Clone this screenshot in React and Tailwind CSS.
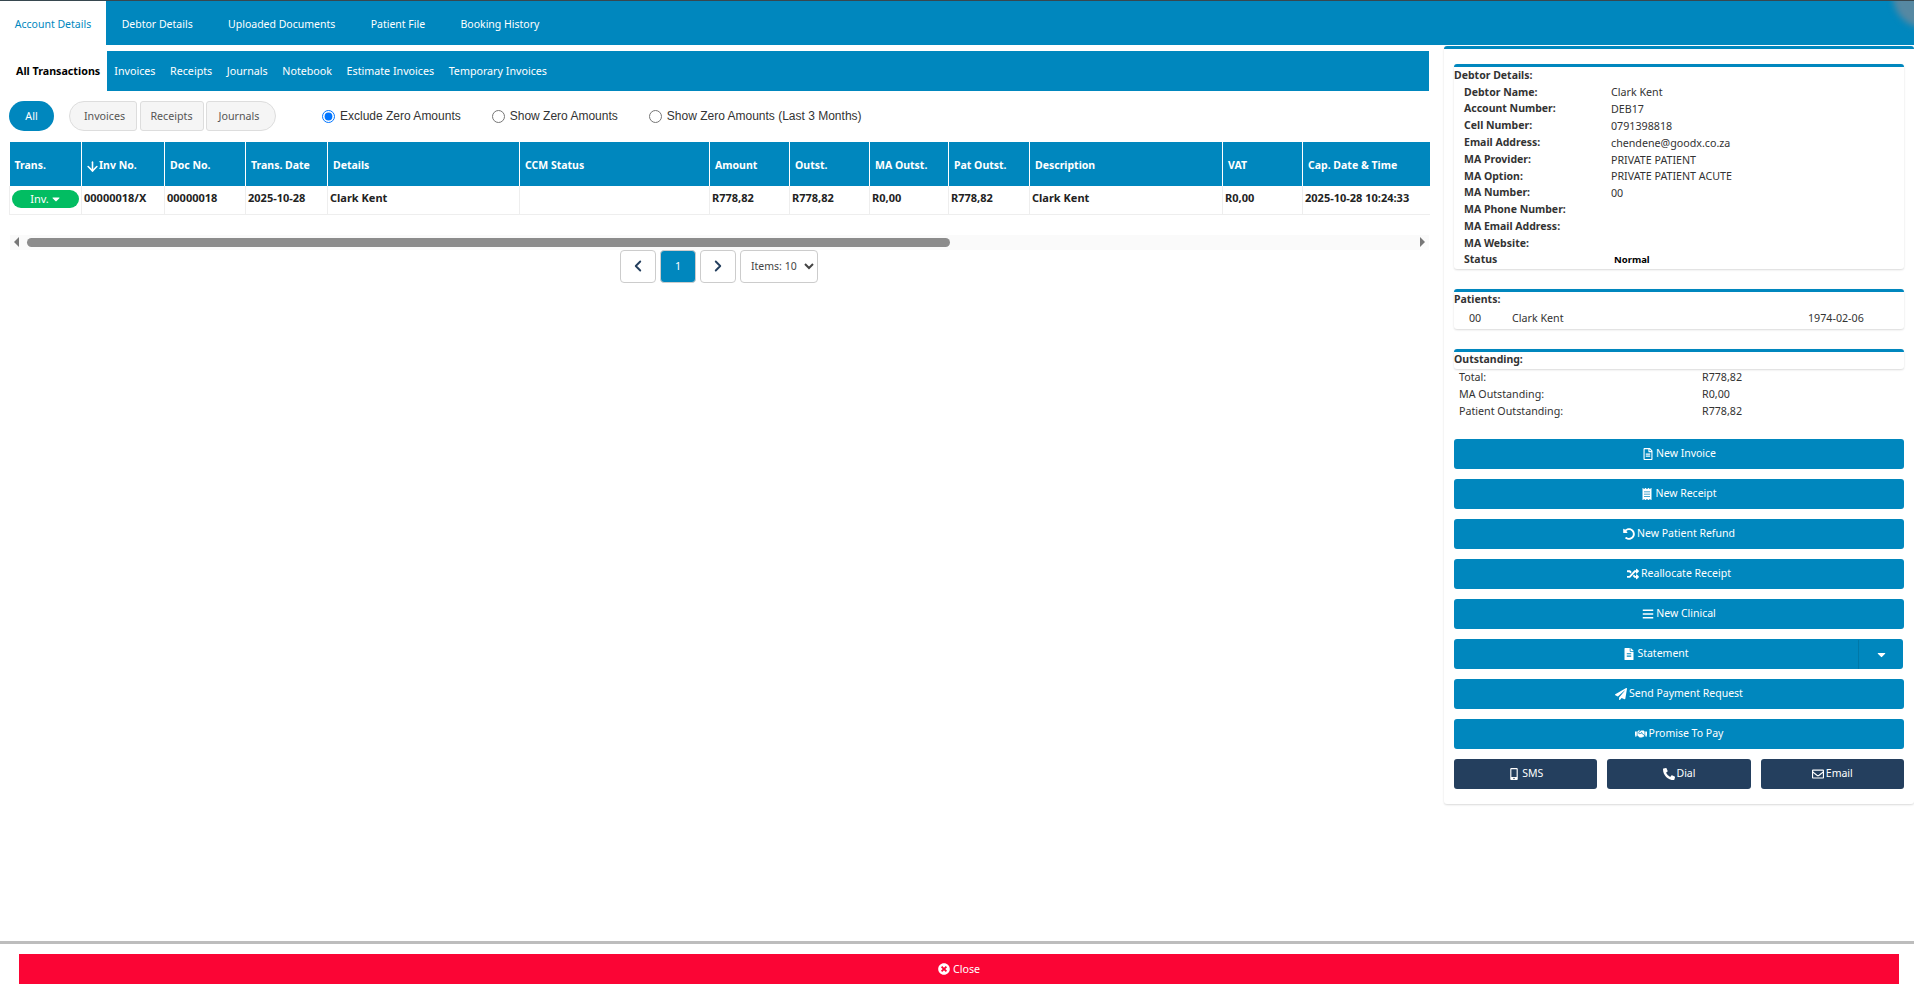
import {ArrowDown, ChevronLeft, ChevronRight} from "lucide-react";
import {
  FaRegFileAlt,
  FaReceipt,
  FaUndoAlt,
  FaRandom,
  FaBars,
  FaFileAlt,
  FaPaperPlane,
  FaHandshake,
  FaMobileAlt,
  FaPhoneAlt,
  FaRegEnvelope,
  FaTimesCircle,
  FaCaretDown,
} from "react-icons/fa";

const tabs = ["Debtor Details", "Uploaded Documents", "Patient File", "Booking History"];
const subTabs = ["Invoices", "Receipts", "Journals", "Notebook", "Estimate Invoices", "Temporary Invoices"];

const columns = [
  {label: "Trans.", width: "w-[72px]"},
  {label: "Inv No.", width: "w-[83px]", sort: true},
  {label: "Doc No.", width: "w-[81px]"},
  {label: "Trans. Date", width: "w-[82px]"},
  {label: "Details", width: "w-[192px]"},
  {label: "CCM Status", width: "w-[190px]"},
  {label: "Amount", width: "w-[80px]"},
  {label: "Outst.", width: "w-[80px]"},
  {label: "MA Outst.", width: "w-[79px]"},
  {label: "Pat Outst.", width: "w-[81px]"},
  {label: "Description", width: "w-[193px]"},
  {label: "VAT", width: "w-[80px]"},
  {label: "Cap. Date & Time", width: "w-[127px]"},
];

const rowValues = [
  "00000018/X",
  "00000018",
  "2025-10-28",
  "Clark Kent",
  "",
  "R778,82",
  "R778,82",
  "R0,00",
  "R778,82",
  "Clark Kent",
  "R0,00",
  "2025-10-28 10:24:33",
];

const debtorRows = [
  ["Debtor Name:", "Clark Kent"],
  ["Account Number:", "DEB17"],
  ["Cell Number:", "0791398818"],
  ["Email Address:", "chendene@goodx.co.za"],
  ["MA Provider:", "PRIVATE PATIENT"],
  ["MA Option:", "PRIVATE PATIENT ACUTE"],
  ["MA Number:", "00"],
  ["MA Phone Number:", ""],
  ["MA Email Address:", ""],
  ["MA Website:", ""],
];

const outstandingRows = [
  ["Total:", "R778,82"],
  ["MA Outstanding:", "R0,00"],
  ["Patient Outstanding:", "R778,82"],
];

const actions = [
  {label: "New Invoice", icon: FaRegFileAlt},
  {label: "New Receipt", icon: FaReceipt},
  {label: "New Patient Refund", icon: FaUndoAlt},
  {label: "Reallocate Receipt", icon: FaRandom},
  {label: "New Clinical", icon: FaBars},
];

const ActionButton = ({icon: Icon, label, className = "bg-[#0087be]"}) => (
  <button className={`flex h-[30px] items-center justify-center gap-[2px] rounded-[3px] pt-px text-[10.5px] text-white ${className}`}>
    <Icon className="h-[12px] w-auto" />
    {label}
  </button>
);

const Section = ({title, children}) => (
  <section className="rounded-[3px] border-t-[3px] border-[#0087be] shadow-[0_1px_2px_rgba(0,0,0,0.15)]">
    <div className="flex h-[17px] items-center text-[10.5px] font-bold">{title}</div>
    {children}
  </section>
);

const App = () => {
  return (
    <div className="flex h-[993px] flex-col overflow-hidden bg-white font-['Noto_Sans',sans-serif] text-[10.7px] text-[#333]">
      {/* Top tabs */}
      <nav className="relative flex h-[45px] shrink-0 overflow-hidden border-t border-[#37474f] bg-[#0087be] text-[10.5px] text-white">
        <div className="flex w-[106px] items-center justify-center bg-white pt-[3px] text-[#0087be]">Account Details</div>
        <div className="-ml-[2px] flex">
          {tabs.map((tab) => (
            <div key={tab} className="flex items-center px-[17.7px] pt-[3px]">
              {tab}
            </div>
          ))}
        </div>
        <div className="absolute -top-[37px] -right-[43px] h-[64px] w-[64px] rounded-full bg-[#5688a2] blur-[3px]"></div>
      </nav>

      <main className="flex min-h-0 flex-1">
        {/* Transactions */}
        <div className="w-[1430px] shrink-0 pt-[6px]">
          <div className="flex h-[40px] w-[1429px] items-center bg-[#0087be] text-white">
            <div className="flex h-full w-[107px] items-center bg-white pl-[16px] font-bold text-black">
              All Transactions
            </div>
            {subTabs.map((tab) => (
              <div key={tab} className="px-[7.3px]">
                {tab}
              </div>
            ))}
          </div>

          <div className="mt-[10px] flex h-[30px] items-center pl-[9px]">
            <button className="h-[30px] w-[45px] rounded-[15px] bg-[#0087be] text-white">All</button>
            <div className="ml-[15px] flex gap-[2.5px] text-[#555]">
              <button className="h-[30px] w-[68px] rounded-l-[15px] rounded-r-[3px] border border-[#ddd] bg-[#f5f5f5] pl-[3px]">
                Invoices
              </button>
              <button className="h-[30px] w-[64px] rounded-[3px] border border-[#ddd] bg-[#f5f5f5]">Receipts</button>
              <button className="h-[30px] w-[70px] rounded-l-[3px] rounded-r-[15px] border border-[#ddd] bg-[#f5f5f5] pr-[4px]">
                Journals
              </button>
            </div>
            <div className="ml-[46px] flex items-center gap-[31px] font-['Liberation_Sans',sans-serif] text-[12px]">
              <label className="flex items-center gap-[5px]">
                <input type="radio" name="zero" defaultChecked className="m-0 h-[13px] w-[13px]" />
                Exclude Zero Amounts
              </label>
              <label className="flex items-center gap-[5px]">
                <input type="radio" name="zero" className="m-0 h-[13px] w-[13px]" />
                Show Zero Amounts
              </label>
              <label className="flex items-center gap-[5px]">
                <input type="radio" name="zero" className="m-0 h-[13px] w-[13px]" />
                Show Zero Amounts (Last 3 Months)
              </label>
            </div>
          </div>

          <div className="mt-[11px] ml-[9px] w-[1420px]">
            <table className="w-full table-fixed border-collapse">
              <thead>
                <tr className="h-[44px] bg-[#0087be] text-left text-[10.5px] text-white">
                  {columns.map((col) => (
                    <th key={col.label} className={`${col.width} border-r border-white pt-[4px] pl-[5px] font-bold last:border-r-0`}>
                      <span className="flex items-center">
                        {col.sort && <ArrowDown className="-mr-[1px] -ml-[2px] h-[15px] w-[15px]" strokeWidth={2.5} />}
                        {col.label}
                      </span>
                    </th>
                  ))}
                </tr>
              </thead>
              <tbody>
                <tr className="h-[28px] border-b border-[#eee] align-top text-[11px] font-bold text-[#222]">
                  <td className="border-x border-[#eee] pt-[4px] pl-[2px]">
                    <button className="flex h-[18px] w-[67px] items-center justify-center gap-[2px] rounded-[9px] bg-[#02bd62] font-normal text-white">
                      Inv.
                      <FaCaretDown className="h-[12px] w-[10px]" />
                    </button>
                  </td>
                  {rowValues.map((value, i) => (
                    <td key={i} className="border-r border-[#eee] pt-[4px] pl-[2px] last:border-r-0">
                      {value}
                    </td>
                  ))}
                </tr>
              </tbody>
            </table>

            {/* Horizontal scrollbar */}
            <div className="mt-[20px] ml-px flex h-[15px] items-center bg-[#fafafa] px-[4px]">
              <div className="h-0 w-0 border-y-[5px] border-r-[5px] border-y-transparent border-r-[#777]"></div>
              <div className="ml-[8px] h-[9px] w-[923px] rounded-[5px] bg-[#8c8c8c]"></div>
              <div className="ml-auto h-0 w-0 border-y-[5px] border-l-[5px] border-y-transparent border-l-[#777]"></div>
            </div>
          </div>

          {/* Pagination */}
          <div className="ml-[620px] flex gap-[4px]">
            <button className="flex h-[33px] w-[36px] items-center justify-center rounded-[4px] border border-[#ccc] text-[#243f5e]">
              <ChevronLeft className="h-[18px] w-[18px]" strokeWidth={2.5} />
            </button>
            <button className="h-[33px] w-[36px] rounded-[4px] border border-[#ccc] bg-[#0087be] text-white">1</button>
            <button className="flex h-[33px] w-[36px] items-center justify-center rounded-[4px] border border-[#ccc] text-[#243f5e]">
              <ChevronRight className="h-[18px] w-[18px]" strokeWidth={2.5} />
            </button>
            <select className="h-[33px] w-[78px] rounded-[4px] border border-[#ccc] bg-white pl-[6px] text-[10.5px] text-[#444]">
              <option>Items: 10</option>
            </select>
          </div>
        </div>

        {/* Debtor panel */}
        <aside className="flex-1 pt-px pl-[14px]">
          <div className="flex h-[758px] flex-col rounded-[3px] border-t-[3px] border-[#0087be] px-[10px] pt-[15px] shadow-[0_1px_2px_rgba(0,0,0,0.15)]">
            <Section title="Debtor Details:">
              <div className="pl-[10px]">
                {debtorRows.map(([label, value]) => (
                  <div key={label} className="flex h-[16.8px] items-center">
                    <span className="w-[147px] text-[10.5px] font-bold">{label}</span>
                    <span>{value}</span>
                  </div>
                ))}
                <div className="flex h-[16.8px] items-center">
                  <span className="w-[150px] text-[10.5px] font-bold">Status</span>
                  <span className="text-[9.5px] font-bold text-black">Normal</span>
                </div>
              </div>
            </Section>

            <div className="mt-[20px]">
              <Section title="Patients:">
                <div className="flex h-[18px] items-center pl-[15px]">
                  <span className="w-[43px]">00</span>
                  <span className="w-[296px]">Clark Kent</span>
                  <span>1974-02-06</span>
                </div>
                <div className="h-[2px]"></div>
              </Section>
            </div>

            <div className="mt-[20px]">
              <Section title="Outstanding:" />
            </div>
            <div className="pl-[5px]">
              {outstandingRows.map(([label, value]) => (
                <div key={label} className="flex h-[17px] items-center">
                  <span className="w-[243px]">{label}</span>
                  <span>{value}</span>
                </div>
              ))}
            </div>

            <div className="mt-[19px] flex flex-col gap-[10px]">
              {actions.map((action) => (
                <ActionButton key={action.label} {...action} />
              ))}
              <div className="flex h-[30px] w-[449px] rounded-[3px] bg-[#0087be] pt-px text-[10.5px] text-white">
                <button className="flex flex-1 items-center justify-center gap-[2px] border-r border-[#0078a8]">
                  <FaFileAlt className="h-[12px] w-auto" />
                  Statement
                </button>
                <button className="flex w-[44px] items-center justify-center">
                  <FaCaretDown className="h-[13px] w-auto" />
                </button>
              </div>
              <ActionButton icon={FaPaperPlane} label="Send Payment Request" />
              <ActionButton icon={FaHandshake} label="Promise To Pay" />
              <div className="grid grid-cols-3 gap-[10px]">
                <ActionButton icon={FaMobileAlt} label="SMS" className="bg-[#243f5e]" />
                <ActionButton icon={FaPhoneAlt} label="Dial" className="bg-[#243f5e]" />
                <ActionButton icon={FaRegEnvelope} label="Email" className="bg-[#243f5e]" />
              </div>
            </div>
          </div>
        </aside>
      </main>

      {/* Footer */}
      <footer className="h-[52px] shrink-0 border-t-[3px] border-[#bdbdbd] pt-[10px] pr-[15px] pl-[19px]">
        <button className="flex h-[30px] w-full items-center justify-center gap-[3px] bg-[#fb0535] text-white">
          <FaTimesCircle className="h-[12px] w-[12px]" />
          Close
        </button>
      </footer>
    </div>
  );
};

export default App;
